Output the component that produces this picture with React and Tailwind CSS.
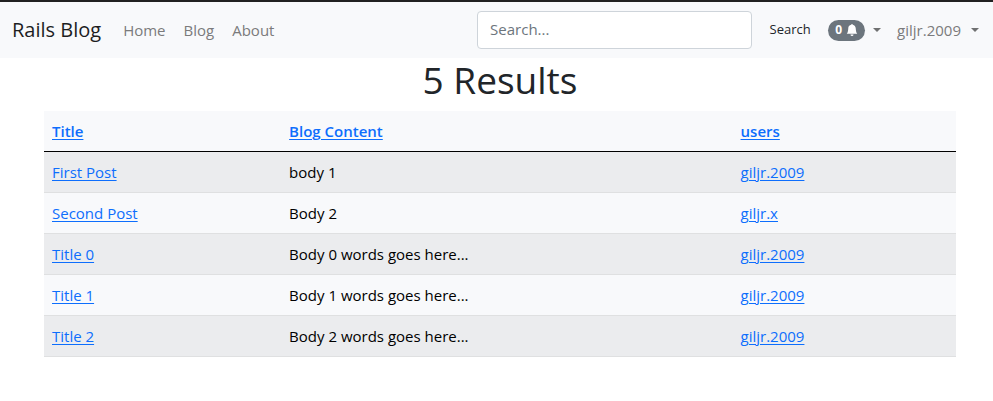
import React from 'react'

const posts = [
  { title: 'First Post', body: 'body 1', user: 'giljr.2009' },
  { title: 'Second Post', body: 'Body 2', user: 'giljr.x' },
  { title: 'Title 0', body: 'Body 0 words goes here...', user: 'giljr.2009' },
  { title: 'Title 1', body: 'Body 1 words goes here...', user: 'giljr.2009' },
  { title: 'Title 2', body: 'Body 2 words goes here...', user: 'giljr.2009' },
]

const columns = ['Title', 'Blog Content', 'users']

function Caret() {
  return <span aria-hidden="true" className="border-x-4 border-t-4 border-x-transparent border-t-[#6f7071]" />
}

function BellIcon() {
  return (
    <svg aria-hidden="true" viewBox="0 0 16 16" className="size-3" fill="currentColor">
      <path d="M8 16a2 2 0 0 0 2-2H6a2 2 0 0 0 2 2zm.995-14.901a1 1 0 1 0-1.99 0A5.002 5.002 0 0 0 3 6c0 1.098-.5 6-2 7h14c-1.5-1-2-5.902-2-7 0-2.42-1.72-4.44-4.005-4.901z" />
    </svg>
  )
}

function Link({ children }) {
  return (
    <a href="#" className="text-[#0d6efd] underline decoration-1 underline-offset-2">
      {children}
    </a>
  )
}

function Navbar() {
  return (
    <nav className="flex h-14 items-center bg-[#f8f9fb] pr-3.5 pl-3">
      <a href="#" className="text-[20px] text-[#1d1e1f]">Rails Blog</a>
      <div className="ml-[22px] flex flex-1 gap-[18px] text-[#7b7b7c]">
        <a href="#">Home</a>
        <a href="#">Blog</a>
        <a href="#">About</a>
      </div>
      <form className="flex items-center" onSubmit={(e) => e.preventDefault()}>
        <input
          type="search"
          aria-label="Search"
          placeholder="Search..."
          className="h-[38px] w-[275px] rounded border border-[#ced4da] bg-white px-3 pb-0.5 text-[#212529] placeholder:text-[#6c757d]"
        />
        <button type="submit" className="ml-4 w-11 pb-0.5 text-[13px] text-[#212529]">Search</button>
      </form>
      <button type="button" aria-label="Notifications" className="ml-4 flex items-center gap-2">
        <span className="flex h-[21px] w-[37px] items-center justify-center gap-1 rounded-full bg-[#6c757d] text-xs font-bold text-white">
          0
          <BellIcon />
        </span>
        <Caret />
      </button>
      <button type="button" className="ml-4 flex items-center gap-2.5 text-[#7b7b7c]">
        giljr.2009
        <Caret />
      </button>
    </nav>
  )
}

export default function App() {
  return (
    <div className="min-h-screen border-t-2 border-[#212121] bg-white font-['Open_Sans','Noto_Sans',sans-serif] text-[15px] leading-6">
      <Navbar />
      <main className="pr-[37px] pl-11">
        <h1 className="mb-2.5 text-center text-[37px] leading-[43px] text-[#212529]">5 Results</h1>
        <table className="w-full table-fixed border-collapse bg-[#f8f9fb] text-black">
          <colgroup>
            <col className="w-[26%]" />
            <col className="w-[49.5%]" />
            <col />
          </colgroup>
          <thead>
            <tr className="h-10 border-b border-black text-left">
              {columns.map((name) => (
                <th key={name} scope="col" className="px-2 font-semibold">
                  <Link>{name}</Link>
                </th>
              ))}
            </tr>
          </thead>
          <tbody>
            {posts.map((post) => (
              <tr key={post.title} className="h-[41px] border-b border-[#dfe0e1] odd:bg-[#ebecee]">
                <td className="px-2"><Link>{post.title}</Link></td>
                <td className="px-2">{post.body}</td>
                <td className="px-2"><Link>{post.user}</Link></td>
              </tr>
            ))}
          </tbody>
        </table>
      </main>
    </div>
  )
}
